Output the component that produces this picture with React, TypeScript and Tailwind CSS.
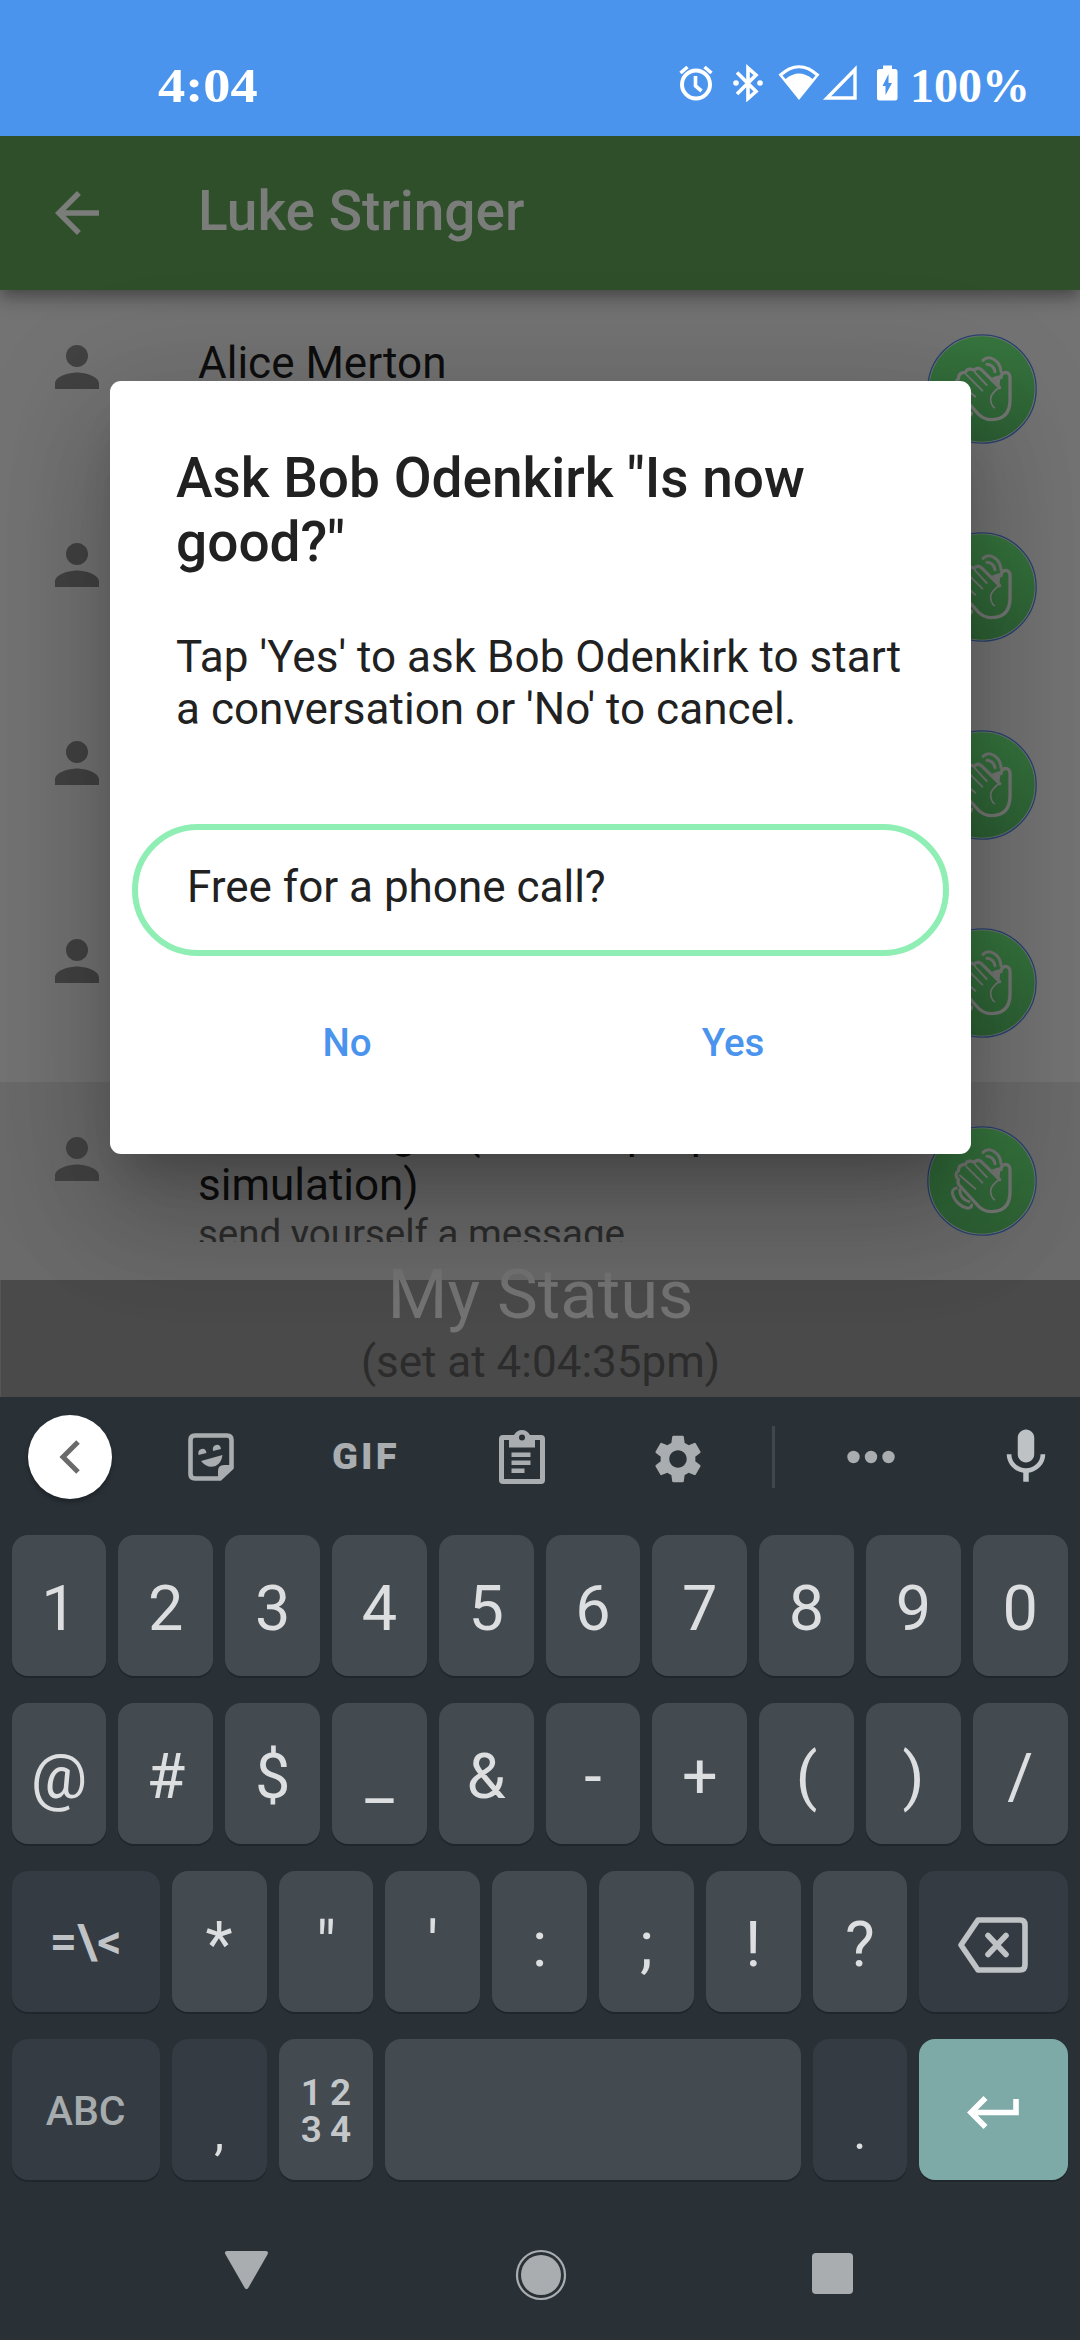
import React from "react";
import { MdArrowBack, MdMic, MdPerson, MdSettings } from "react-icons/md";

function StatusBar() {
  return (
    <header className="relative z-10 flex h-[136px] justify-between bg-[#4a94ed] pr-[50px] pl-[158px] text-white">
      <div
        className="origin-left scale-x-[1.11] pt-[59px] text-[49px] leading-[54px] font-bold"
        style={{ fontFamily: '"Liberation Serif", serif' }}
      >
        4:04
      </div>
      <div className="flex items-start pt-[64px]">
        <svg width="36" height="38" viewBox="0 0 36 38" fill="none" stroke="white" strokeWidth="4">
          <circle cx="18" cy="20.5" r="14" />
          <path d="M17.5 12v10l6 5M2.500 9l7-6M33.500 9l-7-6" strokeWidth="3.600" />
        </svg>
        <svg className="ml-[18px]" width="32" height="38" viewBox="0 0 32 38" fill="none" stroke="white">
          <path d="M5 8.500l19 19-8 7V4l8 7L5 30" strokeWidth="3.600" />
          <circle cx="4" cy="19" r="2.800" fill="white" stroke="none" />
          <circle cx="28" cy="19" r="2.800" fill="white" stroke="none" />
        </svg>
        <svg className="ml-[14px]" width="42" height="38" viewBox="0 0 42 38">
          <path d="M0.500 10.500Q21-8 41.500 10.500L21 36Z" fill="white" />
          <path d="M4.500 11.500Q21-3 37.500 11.500L34.500 15Q21 4 7.500 15Z" fill="#4a94ed" />
        </svg>
        <svg className="ml-[2px]" width="36" height="38" viewBox="0 0 36 38" fill="none" stroke="white" strokeWidth="3.400">
          <path d="M33 5.500v28.500H5Z" />
        </svg>
        <svg className="ml-[18px]" width="22" height="38" viewBox="0 0 22 38">
          <path d="M7 1.500h9v3.500h3q2.500 0 2.500 2.500v26.500q0 2.500-2.500 2.500H3.500q-2.500 0-2.500-2.500V7.500Q1 5 3.500 5H7Z" fill="white" />
          <path d="M12.500 10v9H16l-6.500 12v-9H6.500Z" fill="#4a94ed" />
        </svg>
        <div
          className="-mt-[5px] ml-[12px] text-[48px] leading-[54px] font-bold"
          style={{ fontFamily: '"Liberation Serif", serif' }}
        >
          100%
        </div>
      </div>
    </header>
  );
}

function WaveButton() {
  return (
    <svg className="size-[110px] shrink-0" viewBox="82 77 330 330" fill="none" stroke="#737673" strokeLinecap="round" strokeLinejoin="round">
      <defs>
        <linearGradient id="wave-fill" x1="0" y1="0" x2="0" y2="1">
          <stop offset="0" stopColor="#36753e" />
          <stop offset="1" stopColor="#2d6034" />
        </linearGradient>
      </defs>
      <circle cx="247" cy="242" r="162.500" stroke="#28426f" strokeWidth="4" fill="#737673" />
      <circle cx="247" cy="242" r="158" fill="url(#wave-fill)" stroke="none" />
      <path
        d="M300 238L245 184Q233 175 224 186Q205 176 197 192Q176 192 176 212Q162 222 176 238Q172 250 184 260L237 318Q253 334 277 334Q331 332 331 275V206Q329 192 317 192Q304 194 304 208"
        strokeWidth="10"
      />
      <path d="M276 208Q290 202 303 200L299 238Z" fill="#737673" stroke="none" />
      <path d="M300 236Q274 256 273 270Q273 290 284 298" strokeWidth="5" />
      <path d="M226 192L261 230M200 199L248 247M180 225L227 265" strokeWidth="6" />
      <path d="M250 156Q264 142 282 153Q303 166 304 190M262 168Q282 170 286 190" strokeWidth="9" />
      <path d="M170 263Q154 266 160 286Q172 316 202 323Q214 325 216 314M180 268Q180 294 208 304" strokeWidth="9" />
    </svg>
  );
}

type RowProps = { name: string; detail?: string; self?: boolean };

function ContactRow({ name, detail, self }: RowProps) {
  return (
    <li
      className={
        self
          ? "flex h-[198px] items-start bg-[#6a6a6a] pr-[43px] pl-[44px]"
          : "flex h-[198px] items-start pr-[43px] pl-[44px]"
      }
    >
      <MdPerson className="mt-[44px] size-[66px] shrink-0 text-[#424242]" />
      <div
        className={
          self
            ? "mt-[25px] ml-[88px] h-[135px] w-[640px] overflow-hidden text-[44px] leading-[52px] text-[#0e0e0e]"
            : "mt-[47px] ml-[88px] h-[114px] w-[640px] overflow-hidden text-[44px] leading-[52px] text-[#0e0e0e]"
        }
      >
        <p>{name}</p>
        {detail && <p className="text-[38.5px] leading-[45px] text-[#2c2c2c]">{detail}</p>}
      </div>
      <div className="mt-[44px] ml-auto">
        <WaveButton />
      </div>
    </li>
  );
}

const contacts: RowProps[] = [
  { name: "Alice Merton" },
  { name: "Bob Odenkirk" },
  { name: "Carol Danvers" },
  { name: "David Byrne" },
  { name: "Luke Stringer (for dev purposes simulation)", detail: "send yourself a message", self: true },
];

function Dialog() {
  return (
    <div className="absolute top-[381px] left-[110px] flex h-[773px] w-[861px] flex-col rounded-[11px] bg-white px-[22px] pt-[65px] text-[#212121] shadow-[0_30px_41px_-19px_rgba(0,0,0,0.2),0_66px_105px_8px_rgba(0,0,0,0.14),0_25px_127px_22px_rgba(0,0,0,0.12)]">
      <h2 className="px-[44px] text-[55px] leading-[64px] font-medium">Ask Bob Odenkirk "Is now good?"</h2>
      <p className="mt-[57px] px-[44px] text-[44px] leading-[52px] tracking-[0.03px]">
        Tap 'Yes' to ask Bob Odenkirk to start a conversation or 'No' to cancel.
      </p>
      <div className="mt-[89px] flex h-[132px] items-center rounded-full border-[6px] border-[#8eeeb4] pb-[6px] pl-[49px] text-[44px]">
        Free for a phone call?
      </div>
      <div className="mt-[62px] flex text-[38.5px] leading-[50px] font-medium text-[#4a94ed]">
        <span className="ml-[28px] w-[374px] text-center">No</span>
        <span className="ml-[12px] w-[374px] text-center">Yes</span>
      </div>
    </div>
  );
}

function Toolbar() {
  return (
    <div className="flex h-[120px] items-center text-[#a9adb0]">
      <div className="ml-[28px] flex size-[84px] items-center justify-center rounded-full bg-white shadow-[0_3px_5px_rgba(0,0,0,0.3)]">
        <svg width="24" height="36" viewBox="0 0 24 36" fill="none" stroke="#6a6a6a" strokeWidth="5">
          <path d="M20 3L5 18l15 15" />
        </svg>
      </div>
      <svg className="ml-[76px]" width="46" height="48" viewBox="0 0 46 48" fill="currentColor">
        <path
          d="M7 2.500h32q4.500 0 4.500 4.500v27.500L32 45.500H7Q2.500 45.500 2.500 41V7Q2.500 2.500 7 2.500Z"
          fill="none"
          stroke="currentColor"
          strokeWidth="4.600"
        />
        <path d="M30 46v-8q0-6 6-6h9v4L33 47Z" />
        <path d="M10.500 22q-1-5 3-6t5 4ZM25 18q-1-5 3-6t5 4ZM13 28l21.500-6q-1 8-7 11-8 3-14.500-5Z" />
      </svg>
      <div className="ml-[98px] w-[68px] origin-left scale-x-[1.03] text-[37px] font-black tracking-[3px]">GIF</div>
      <svg className="ml-[99px]" width="46" height="54" viewBox="0 0 46 54" fill="currentColor">
        <path
          fillRule="evenodd"
          d="M4 5H15Q18 0 23 0T31 5H42Q46 5 46 9V50Q46 54 42 54H4Q0 54 0 50V9Q0 5 4 5ZM5 10V49H41V10H36V17.500H10V10ZM23 4.500A3 3 0 1 0 23 10.500A3 3 0 1 0 23 4.500Z"
        />
        <path d="M12.500 22.500h19v4.600h-19zM12.500 30.500h19v4.600h-19zM12.500 38.500h13v4.600h-13z" />
      </svg>
      <MdSettings className="mt-[4px] ml-[104px] size-[58px]" />
      <div className="ml-[65px] h-[62px] w-[3px] bg-[#41484d]" />
      <svg className="ml-[72px]" width="48" height="14" viewBox="0 0 48 14" fill="currentColor">
        <circle cx="6.500" cy="7" r="6.200" />
        <circle cx="24" cy="7" r="6.200" />
        <circle cx="41.500" cy="7" r="6.200" />
      </svg>
      <MdMic className="ml-[98px] size-[66px] text-[#bec2c5]" />
    </div>
  );
}

const keyBase = "flex h-[141px] items-center justify-center rounded-[16px] shadow-[0_2px_0_#20272b] ";
const lightKey = keyBase + "w-[94.8px] bg-[#434a50] pt-[6px]";
const darkWide = keyBase + "w-[148.2px] bg-[#343b42]";
const darkKey = keyBase + "w-[94.8px] bg-[#343b42] pt-[44px] text-[50px]";

function Keys({ labels }: { labels: string[] }) {
  return (
    <>
      {labels.map((label) => (
        <div key={label} className={lightKey}>
          {label}
        </div>
      ))}
    </>
  );
}

function Keyboard() {
  const row = "flex gap-[12px]";
  return (
    <section className="h-[943px] bg-[#293137]">
      <Toolbar />
      <div className="mt-[18px] flex flex-col gap-[27px] pl-[11.6px] text-[63px] leading-[74px] text-[#dcdee0]">
        <div className={row}>
          <Keys labels={["1", "2", "3", "4", "5", "6", "7", "8", "9", "0"]} />
        </div>
        <div className={row}>
          <Keys labels={["@", "#", "$", "_", "&", "-", "+", "(", ")", "/"]} />
        </div>
        <div className={row}>
          <div className={darkWide}>
            <span className="text-[48px] font-semibold text-[#c0c3c6]">=\&lt;</span>
          </div>
          <Keys labels={["*", '"', "'", ":", ";", "!", "?"]} />
          <div className={darkWide}>
            <svg className="mt-[6px]" width="70" height="56" viewBox="0 0 70 56" fill="none" stroke="#c0c3c6" strokeWidth="5.600" strokeLinejoin="round">
              <path d="M20 3h42q5 0 5 5v40q0 5-5 5H20L3 28Z" />
              <path d="M30 18.500l18 19M48 18.500l-18 19" strokeLinecap="round" />
            </svg>
          </div>
        </div>
        <div className={row}>
          <div className={darkWide}>
            <span className="pt-[2px] text-[41px] font-medium text-[#a6abae]">ABC</span>
          </div>
          <div className={darkKey}>,</div>
          <div className="grid h-[141px] w-[94.8px] grid-cols-2 content-center rounded-[16px] bg-[#434a50] px-[18px] pt-[2px] text-center text-[37px] leading-[37px] font-semibold text-[#c4c7ca] shadow-[0_2px_0_#20272b]">
            <span>1</span>
            <span>2</span>
            <span>3</span>
            <span>4</span>
          </div>
          <div className="h-[141px] w-[415.2px] rounded-[16px] bg-[#434a50] shadow-[0_2px_0_#20272b]" />
          <div className={darkKey}>.</div>
          <div className="flex h-[141px] w-[148.2px] items-center justify-center rounded-[16px] bg-[#7daaa7] shadow-[0_2px_0_#20272b]">
            <svg className="mt-[6px]" width="54" height="36" viewBox="0 0 54 36" fill="none" stroke="white" strokeWidth="5.600">
              <path d="M50 4v13.500H6M19.500 3L5 17.500 19.500 32" />
            </svg>
          </div>
        </div>
      </div>
      <nav className="flex h-[118px] items-center pt-[69px] text-[#a9adb0]">
        <svg className="ml-[223px]" width="47" height="52" viewBox="0 0 47 52">
          <path d="M4 5h39L23.500 39Z" fill="currentColor" stroke="currentColor" strokeWidth="4" strokeLinejoin="round" />
        </svg>
        <svg className="mt-[2px] ml-[245px]" width="52" height="52" viewBox="0 0 52 52">
          <circle cx="26" cy="26" r="20" fill="currentColor" />
          <circle cx="26" cy="26" r="24" fill="none" stroke="currentColor" strokeWidth="2.200" />
        </svg>
        <div className="ml-[245px] size-[41px] rounded-[4px] bg-[#a9adb0]" />
      </nav>
    </section>
  );
}

export default function App() {
  return (
    <main
      className="relative flex h-[2340px] w-[1080px] flex-col overflow-hidden bg-[#737373]"
      style={{ fontFamily: "Roboto, sans-serif" }}
    >
      <StatusBar />
      <div className="z-0 flex h-[154px] items-center bg-[#2e4f29] pl-[44px] text-[#7b7d7b] shadow-[0_6px_11px_-3px_rgba(0,0,0,0.2),0_11px_14px_rgba(0,0,0,0.14),0_3px_28px_rgba(0,0,0,0.12)]">
        <MdArrowBack className="size-[66px]" />
        <h1 className="ml-[88px] pb-[4px] text-[55px] leading-[64px] font-medium">Luke Stringer</h1>
      </div>
      <ul className="h-[990px]">
        {contacts.map((c) => (
          <ContactRow key={c.name} name={c.name} detail={c.detail} self={c.self} />
        ))}
      </ul>
      <div className="flex h-[117px] flex-col items-center border-l border-[#555] bg-[#4a4a4a]">
        <div className="-mt-[24px] text-[68.75px] leading-[78px] text-[#737373]">My Status</div>
        <div className="mt-[2px] text-[44px] leading-[52px] text-[#2c2c2c]">(set at 4:04:35pm)</div>
      </div>
      <Dialog />
      <div className="relative">
        <Keyboard />
      </div>
    </main>
  );
}
